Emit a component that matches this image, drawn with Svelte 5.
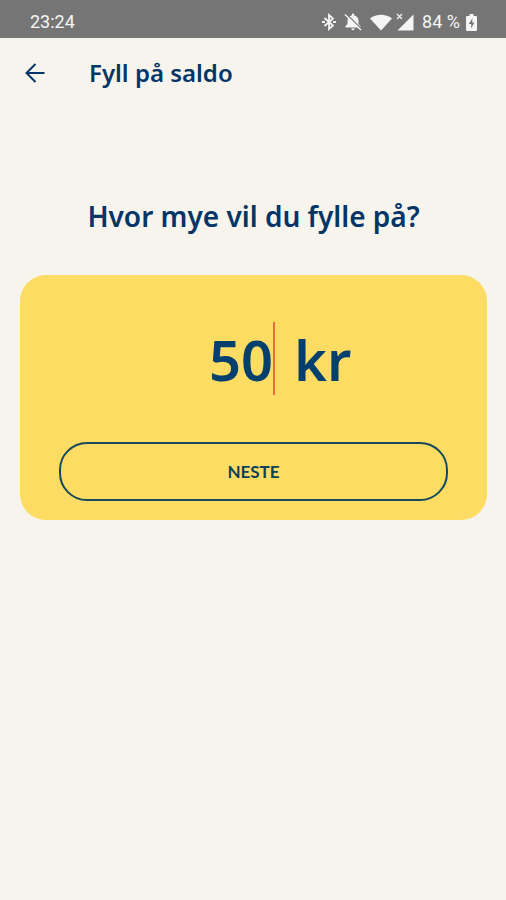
<script>
  let amount = $state('50');
</script>

<div class="screen">
  <div class="status">
    <span class="time">23:24</span>
    <div class="indicators">
      <svg width="14" height="18" viewBox="0 0 14 18" fill="none" stroke="currentColor" stroke-width="1.8" aria-label="Bluetooth">
        <path d="M2.500 5 11 12.500 7 16V2l4 3.500L2.500 13" />
        <path d="M0 9h3M11 9h3" stroke-width="2" />
      </svg>
      <svg class="bell" width="18" height="18" viewBox="0 0 18 18" aria-label="Varsler av">
        <path d="M1.500 14.500V13L3.500 11V8C3.500 5 5.300 3 7.800 2.600V1.800a1.200 1.200 0 0 1 2.400 0v.8C12.700 3 14.500 5 14.500 8v3l2 2v1.500ZM7.200 15.500h3.600a1.800 1.800 0 0 1-3.600 0Z" fill="currentColor" />
        <path d="M2 .8 17.500 15.800" stroke="#757575" stroke-width="1.200" />
        <path d="M1 1.500 17 17" stroke="currentColor" stroke-width="1.400" />
      </svg>
      <svg class="wifi" width="22" height="17" viewBox="0 0 22 17" aria-label="Wi-Fi">
        <path d="M0 4.500C6.500-.5 15.500-.5 22 4.500L11 16.500Z" fill="currentColor" />
      </svg>
      <svg class="signal" width="18" height="18" viewBox="0 0 18 18" aria-label="Mobilnett">
        <path d="M17.500 1.500V17.500H1.500Z" fill="currentColor" />
        <path d="M1 1 6 6M6 1 1 6" stroke="currentColor" stroke-width="1.200" />
      </svg>
      <span class="percent">84 %</span>
      <svg width="11" height="17" viewBox="0 0 11 17" aria-label="Lader">
        <path d="M3.500 0h4v2H10a1 1 0 0 1 1 1v13a1 1 0 0 1-1 1H1a1 1 0 0 1-1-1V3a1 1 0 0 1 1-1h2.500Z" fill="currentColor" />
        <path d="M6.500 4 2.800 10h2.400v4.500L8.400 8.500H6.200Z" fill="#757575" />
      </svg>
    </div>
  </div>

  <header>
    <button class="back" type="button" aria-label="Tilbake">
      <svg width="20" height="20" viewBox="0 0 20 20" fill="none" stroke="currentColor" stroke-width="2">
        <path d="M19.500 10H2M10.500 1 1.500 10l9 9" />
      </svg>
    </button>
    <h1>Fyll på saldo</h1>
  </header>

  <main>
    <h2><label for="amount">Hvor mye vil du fylle på?</label></h2>
    <form class="card" onsubmit={(e) => e.preventDefault()}>
      <div class="amount">
        <input id="amount" type="text" inputmode="numeric" bind:value={amount} />
        <span class="caret"></span>
        <span class="unit">kr</span>
      </div>
      <button class="next" type="submit">NESTE</button>
    </form>
  </main>
</div>

<style>
  :global(body) {
    margin: 0;
    background: #f7f4ed;
  }
  .screen {
    min-height: 100vh;
    background: #f7f4ed;
    color: #053566;
    font-family: "Noto Sans", sans-serif;
  }
  .status {
    display: flex;
    align-items: center;
    justify-content: space-between;
    box-sizing: border-box;
    height: 38px;
    padding: 6px 29px 0 30px;
    background: #757575;
    color: #f5f5f5;
    font-family: Roboto, sans-serif;
    font-size: 18px;
    line-height: 24px;
  }
  .indicators {
    display: flex;
    align-items: center;
  }
  .bell {
    margin-left: 8px;
  }
  .wifi {
    margin-left: 8px;
  }
  .signal {
    margin-left: 4px;
  }
  .percent {
    margin: 0 6px 0 8px;
  }
  header {
    display: flex;
    align-items: center;
    height: 70px;
    padding: 0 25px;
  }
  .back {
    display: flex;
    padding: 0;
    border: 0;
    background: none;
    color: inherit;
  }
  h1 {
    margin: 0 0 0 44px;
    font-size: 24px;
    line-height: 32px;
    font-weight: 600;
  }
  main {
    padding: 88px 19px 0 20px;
  }
  h2 {
    margin: 0;
    font-size: 28px;
    line-height: 40px;
    font-weight: 600;
    text-align: center;
  }
  .card {
    box-sizing: border-box;
    margin-top: 39px;
    padding: 47px 39px 19px;
    border-radius: 26px;
    background: #fcdc62;
  }
  .amount {
    display: flex;
    align-items: center;
    height: 73px;
    color: #04406d;
    font-size: 56px;
    line-height: 72px;
    font-weight: 600;
  }
  input {
    flex: 1 1 0;
    min-width: 0;
    height: 72px;
    padding: 0;
    border: 0;
    outline: 0;
    background: none;
    color: inherit;
    font: inherit;
    text-align: right;
  }
  .caret {
    width: 2px;
    height: 73px;
    background: #ef6a3f;
  }
  .unit {
    box-sizing: border-box;
    width: 173px;
    padding-left: 19px;
  }
  .next {
    display: block;
    box-sizing: border-box;
    width: 100%;
    height: 59px;
    margin-top: 47px;
    padding: 0;
    border: 2px solid #154a5c;
    border-radius: 28px;
    background: none;
    color: #0b4257;
    font-family: Lato, sans-serif;
    font-size: 17px;
    line-height: 24px;
    font-weight: 700;
  }
</style>
